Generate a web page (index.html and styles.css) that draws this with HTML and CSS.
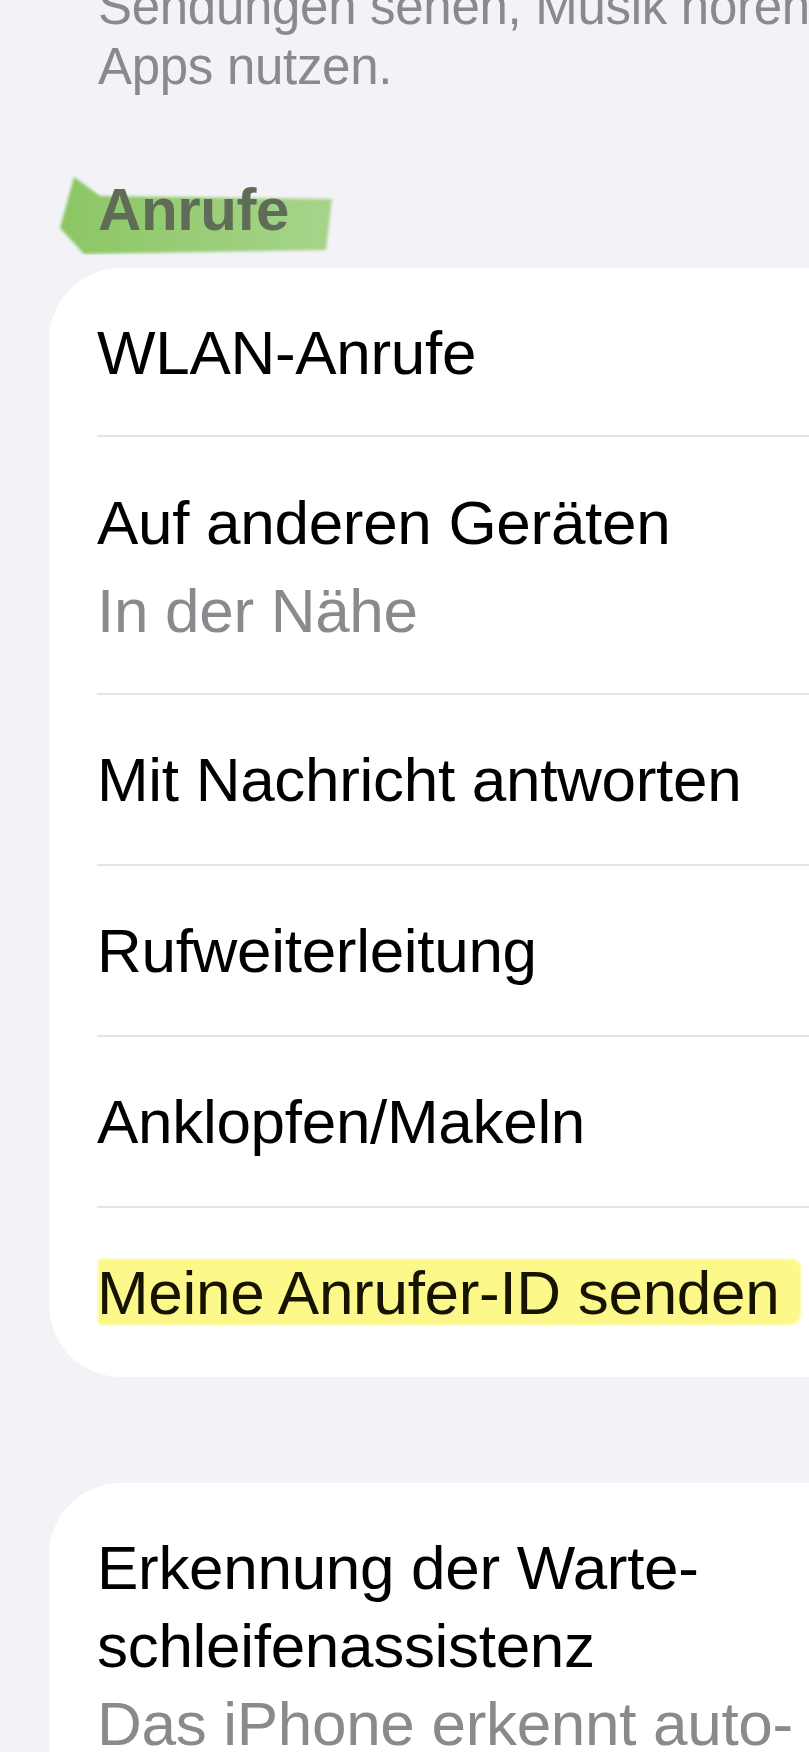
FILE: index.html
```html
<!DOCTYPE html>
<html lang="de">

<head>
    <meta charset="UTF-8">
    <meta name="viewport" content="width=device-width, initial-scale=1.0">
    <title>Telefon</title>
    <link rel="stylesheet" href="styles.css">
</head>

<body>
    <div class="settings">
        <p class="group-footer">Sendungen sehen, Musik hören und<br>Apps nutzen.</p>

        <h2 class="group-header">
            <svg class="marker" width="280" height="82" viewBox="0 0 280 82" aria-hidden="true">
                <defs>
                    <linearGradient id="greenInk" x1="0" y1="0" x2="1" y2="0">
                        <stop offset="0" stop-color="#8bc663" />
                        <stop offset="1" stop-color="#a6d48a" />
                    </linearGradient>
                    <filter id="soft" x="-5%" y="-10%" width="110%" height="120%">
                        <feGaussianBlur stdDeviation="1.6" />
                    </filter>
                </defs>
                <polygon points="18,4 44,23 276,26 270,77 28,81 4,55" fill="url(#greenInk)" filter="url(#soft)" />
            </svg>
            <span class="header-text">Anrufe</span>
        </h2>

        <div class="card">
            <div class="row">
                <div class="row-title">WLAN-Anrufe</div>
            </div>
            <div class="row row-double">
                <div class="row-title">Auf anderen Geräten</div>
                <div class="row-subtitle">In der Nähe</div>
            </div>
            <div class="row">
                <div class="row-title">Mit Nachricht antworten</div>
            </div>
            <div class="row">
                <div class="row-title">Rufweiterleitung</div>
            </div>
            <div class="row">
                <div class="row-title">Anklopfen/Makeln</div>
            </div>
            <div class="row">
                <div class="row-title"><span class="highlight">Meine Anrufer-ID senden</span></div>
            </div>
        </div>

        <div class="card card-next">
            <div class="row">
                <div class="row-title">Erkennung der Warte-<br>schleifenassistenz</div>
                <div class="row-subtitle tight">Das iPhone erkennt auto-</div>
            </div>
        </div>
    </div>
</body>

</html>
```

FILE: styles.css
```css
body {
    margin: 0;
    padding: 0;
    background-color: #f2f2f7;
    font-family: "Liberation Sans", Arial, sans-serif;
    overflow: hidden;
}

.settings {
    padding-left: 49px;
}

.group-footer {
    margin: -23px 0 0 0;
    padding-left: 49px;
    font-size: 51px;
    line-height: 60px;
    color: #8a8a8e;
    white-space: nowrap;
    letter-spacing: -0.3px;
}

.group-header {
    position: relative;
    margin: 78px 0 23px 0;
    padding-left: 49px;
    font-size: 60px;
    line-height: 70px;
    font-weight: bold;
    letter-spacing: -0.4px;
}

.group-header .marker {
    position: absolute;
    left: 7px;
    top: -2px;
}

.group-header .header-text {
    position: relative;
    color: #5f6c58;
}

.card {
    background: #fff;
    border-radius: 72px 0 0 72px;
    margin-right: -80px;
    padding-left: 48px;
}

.card-next {
    margin-top: 106px;
    border-radius: 72px 0 0 0;
}

.row {
    padding: 46px 0 45px 0;
    font-size: 62px;
    line-height: 78px;
    letter-spacing: -0.3px;
    white-space: nowrap;
}

.row:first-child {
    padding-bottom: 43px;
}

.row + .row {
    border-top: 2px solid #e4e4e9;
}

.row-double {
    padding: 47px 0 43px 0;
}

.row-title {
    color: #000;
}

.row-subtitle {
    margin-top: 10px;
    color: #8a8a8e;
}

.row-subtitle.tight {
    margin-top: 0;
}

.highlight {
    position: relative;
    z-index: 0;
    display: inline-block;
    color: #161400;
}

.highlight::before {
    content: "";
    position: absolute;
    left: 1px;
    right: -22px;
    top: 5px;
    bottom: 7px;
    background: #fcf88a;
    border-radius: 3px 10px 12px 4px;
    filter: blur(1.2px);
    z-index: -1;
}
```
